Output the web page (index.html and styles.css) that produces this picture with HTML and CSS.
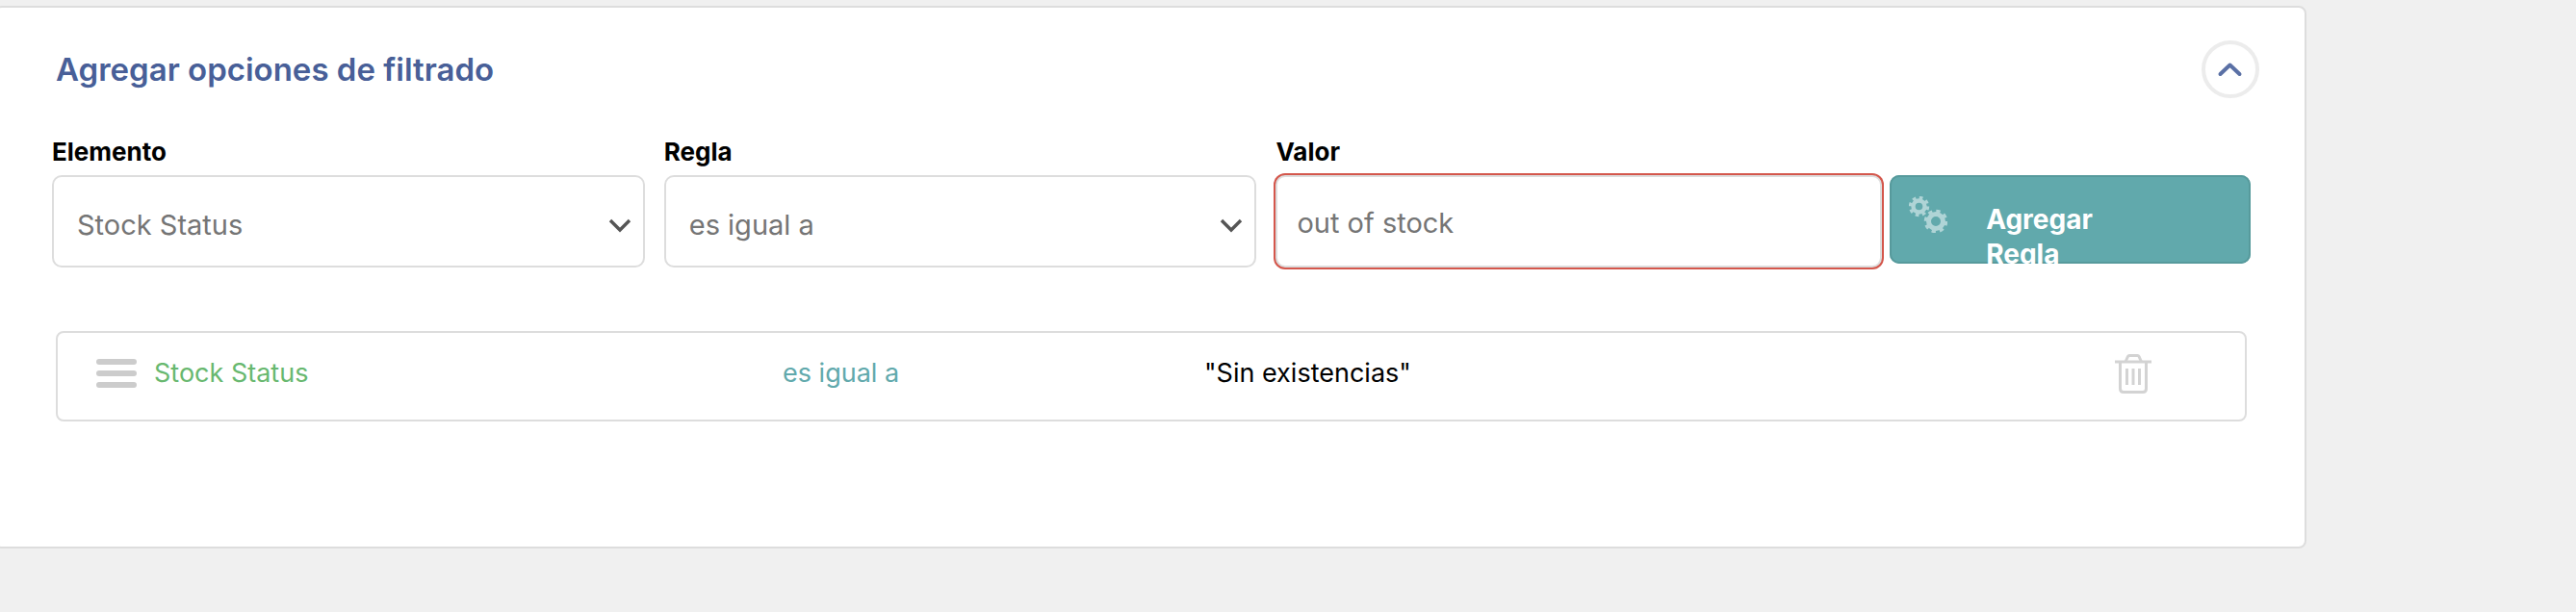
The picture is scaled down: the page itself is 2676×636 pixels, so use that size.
FILE: index.html
```html
<!DOCTYPE html>
<html lang="es">
<head>
<meta charset="utf-8">
<meta name="viewport" content="width=device-width, initial-scale=1">
<title>Agregar opciones de filtrado</title>
<link rel="stylesheet" href="styles.css">
</head>
<body>
<main class="panel">
  <header class="panel-head">
    <h2 class="panel-title">Agregar opciones de filtrado</h2>
    <button class="toggle" type="button" aria-label="Contraer">
      <svg viewBox="0 0 60 60" width="60" height="60" fill="none" stroke-linecap="round">
        <circle cx="30" cy="30" r="28" stroke="#ececec" stroke-width="4"/>
        <path d="M19.500 35L29.500 25.500L39.500 35" stroke="#5a70a5" stroke-width="4" stroke-linejoin="round"/>
      </svg>
    </button>
  </header>

  <form class="rule-form">
    <div class="fields">
      <div class="field">
        <label class="label" for="element">Elemento</label>
        <div class="select-wrap">
          <select class="control select" id="element"><option>Stock Status</option></select>
          <svg class="arrow" viewBox="0 0 24 16" width="24" height="16" fill="none" stroke="#555" stroke-width="3.400"><path d="M2 3L12 13L22 3"/></svg>
        </div>
      </div>
      <div class="field">
        <label class="label" for="rule">Regla</label>
        <div class="select-wrap">
          <select class="control select" id="rule"><option>es igual a</option></select>
          <svg class="arrow" viewBox="0 0 24 16" width="24" height="16" fill="none" stroke="#555" stroke-width="3.400"><path d="M2 3L12 13L22 3"/></svg>
        </div>
      </div>
      <div class="field">
        <label class="label" for="value">Valor</label>
        <input class="control input invalid" id="value" type="text" value="out of stock">
      </div>
    </div>
    <button class="add" type="button">
      <svg class="cogs" viewBox="0 0 40 38" width="40" height="38" fill="none" stroke="#afd4d6">
        <circle cx="10.500" cy="10.500" r="6" stroke-width="4.400"/>
        <circle cx="10.500" cy="10.500" r="9" stroke-width="3.400" stroke-dasharray="3.600 3.470"/>
        <circle cx="28" cy="26" r="7.500" stroke-width="5"/>
        <circle cx="28" cy="26" r="10.500" stroke-width="3.600" stroke-dasharray="4.200 4.047"/>
      </svg>
      <span class="add-text">Agregar Regla</span>
    </button>
  </form>

  <ul class="rules">
    <li class="rule">
      <div class="rule-element">
        <svg viewBox="0 0 42 30" width="42" height="30" fill="#ccc"><rect width="42" height="6" rx="3"/><rect y="12" width="42" height="6" rx="3"/><rect y="24" width="42" height="6" rx="3"/></svg>
        <span>Stock Status</span>
      </div>
      <span class="rule-operator">es igual a</span>
      <span class="rule-value">"Sin existencias"</span>
      <button class="delete" type="button" aria-label="Eliminar">
        <svg viewBox="0 0 38 42" width="38" height="42" fill="none" stroke="#d3d3d3" stroke-width="3">
          <path d="M0 9H38"/>
          <path d="M11 9L13.500 3.500Q14 2.500 15 2.500H23.500Q24.500 2.500 25 3.500L27.500 9"/>
          <path d="M5.500 9V37Q5.500 40.500 9 40.500H29Q32.500 40.500 32.500 37V9"/>
          <path d="M12.500 16V33M19 16V33M25.500 16V33"/>
        </svg>
      </button>
    </li>
  </ul>
</main>
</body>
</html>
```
FILE: styles.css
```css
* { box-sizing: border-box; }

body {
  margin: 0;
  padding: 6px 280px 66px 0;
  background: #f0f0f0;
  color: #000;
  font-family: Inter, "Liberation Sans", sans-serif;
  font-size: 27px;
}

button, input, select { font: inherit; }

.panel {
  margin-left: -6px;
  padding: 34px 56px 130px 58px;
  background: #fff;
  border: 2px solid #ddd;
  border-radius: 8px;
}

.panel-head {
  display: flex;
  justify-content: space-between;
  align-items: center;
  padding: 0 0 0 4px;
  margin-right: -9px;
}

.panel-title {
  margin: 0;
  color: #485f98;
  font-size: 33px;
  font-weight: 600;
  line-height: 44px;
}

.toggle {
  width: 60px;
  height: 60px;
  padding: 0;
  border: 0;
  background: none;
}

.toggle svg, .delete svg { display: block; }

.rule-form {
  display: grid;
  grid-template-columns: 1902fr 375fr;
  align-items: start;
  gap: 8px;
  margin-top: 38px;
}

.fields {
  display: grid;
  grid-template-columns: 616fr 616fr 630fr;
  gap: 20px;
}

.label {
  display: block;
  margin-bottom: 6px;
  font-size: 26px;
  font-weight: 700;
  line-height: 36px;
}

.select-wrap { display: grid; align-items: center; }
.select-wrap > * { grid-area: 1 / 1; }

.control {
  width: 100%;
  height: 96px;
  border: 2px solid #ddd;
  border-radius: 10px;
  background: #fff;
  color: #757575;
  font-size: 29px;
}

.select {
  appearance: none;
  padding: 6px 60px 0 24px;
}

.arrow {
  justify-self: end;
  margin: 8px 14px 0 0;
  pointer-events: none;
}

.input {
  padding: 2px 20px 0;
}

.invalid {
  box-shadow: 0 0 0 2px #d4574c;
  outline: 0;
}

.add {
  display: flex;
  align-items: flex-start;
  gap: 40px;
  height: 92px;
  margin-top: 42px;
  padding: 22px 20px 0;
  border: 0;
  border-radius: 10px;
  background: #61a9ac;
  box-shadow: inset 0 0 0 2px #579a9c;
  color: #fff;
  font-size: 28px;
  font-weight: 700;
  line-height: 36px;
  text-align: left;
  overflow: hidden;
}

.cogs { flex: none; }

.add-text {
  max-width: 160px;
  padding-top: 6px;
}

.rules {
  margin: 66px 4px 0 4px;
  padding: 0;
  list-style: none;
}

.rule {
  display: grid;
  grid-template-columns: 713fr 438fr 946fr auto;
  align-items: center;
  height: 94px;
  padding: 0 97px 6px 40px;
  border: 2px solid #ddd;
  border-radius: 8px;
  line-height: 36px;
}

.rule-element {
  display: flex;
  align-items: center;
  gap: 18px;
  color: #68b86f;
}

.rule-operator { color: #61a9ac; }

.delete {
  padding: 0;
  border: 0;
  background: none;
}
```
